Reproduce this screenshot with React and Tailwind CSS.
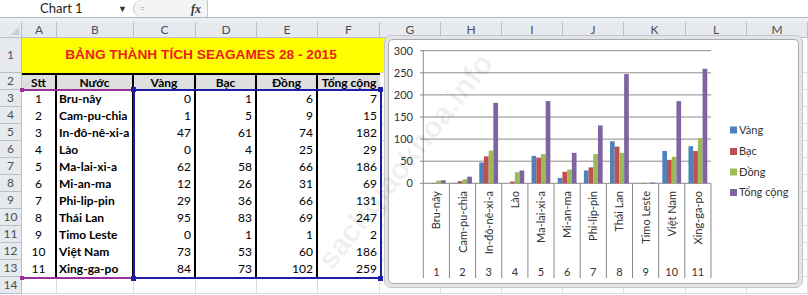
import React from 'react';

const COLS = [
  { key: 'A', w: 35 }, { key: 'B', w: 77 }, { key: 'C', w: 62 }, { key: 'D', w: 61 },
  { key: 'E', w: 61 }, { key: 'F', w: 62 }, { key: 'G', w: 61 }, { key: 'H', w: 61 },
  { key: 'I', w: 61 }, { key: 'J', w: 61 }, { key: 'K', w: 62 }, { key: 'L', w: 61 },
  { key: 'M', w: 61 },
];

const DATA = [
  ['Bru-nây', 0, 1, 6, 7],
  ['Cam-pu-chia', 1, 5, 9, 15],
  ['In-đô-nê-xi-a', 47, 61, 74, 182],
  ['Lào', 0, 4, 25, 29],
  ['Ma-lai-xi-a', 62, 58, 66, 186],
  ['Mi-an-ma', 12, 26, 31, 69],
  ['Phi-lip-pin', 29, 36, 66, 131],
  ['Thái Lan', 95, 83, 69, 247],
  ['Timo Leste', 0, 1, 1, 2],
  ['Việt Nam', 73, 53, 60, 186],
  ['Xing-ga-po', 84, 73, 102, 259],
];

const SERIES = [
  { name: 'Vàng', color: '#4f81bd' },
  { name: 'Bạc', color: '#c0504d' },
  { name: 'Đồng', color: '#9bbb59' },
  { name: 'Tổng cộng', color: '#8064a2' },
];

const HEAD = ['Stt', 'Nước', 'Vàng', 'Bạc', 'Đồng', 'Tổng cộng'];

const hdr = 'flex items-center justify-center bg-[#e6e9ed] border-r border-b border-[#b9c0c9] text-[#4b4f55]';
const plain = 'border-r border-b border-[#d8dbdf] bg-white';

// chart geometry (px, relative to chart inner box)
const X0 = 34.3;
const CW = 26.15;
const Y0 = 143.3;
const K = 0.442;
const BW = 4.7;

const Chart = () => (
  <svg width="409" height="243" viewBox="0 0 409 243" className="block" fontFamily="Lato, 'Liberation Sans', sans-serif">
    {[0, 50, 100, 150, 200, 250, 300].map(v => {
      const y = Y0 - v * K;
      return (
        <g key={v}>
          <line x1={31} x2={322} y1={y} y2={y} stroke="#8a8a8a" strokeWidth="1" />
          <text x={24} y={y + 3.8} fontSize="11" fill="#333" textAnchor="end">{v}</text>
        </g>
      );
    })}
    <line x1={X0} x2={X0} y1={Y0 - 300 * K} y2={238} stroke="#8a8a8a" />
    {DATA.map((row, i) => {
      const cx = X0 + CW * i;
      const start = cx + (CW - BW * 4) / 2;
      return (
        <g key={row[0]}>
          {row.slice(1).map((v, s) => (
            <rect key={s} x={start + s * BW} y={Y0 - v * K} width={BW} height={v * K} fill={SERIES[s].color} />
          ))}
          <line x1={cx + CW} x2={cx + CW} y1={Y0} y2={238} stroke="#8a8a8a" />
          <text transform={`translate(${cx + CW / 2 + 4} 151) rotate(-90)`} fontSize="11" fill="#333" textAnchor="end">{row[0]}</text>
          <text x={cx + CW / 2} y={235.5} fontSize="11" fill="#333" textAnchor="middle">{i + 1}</text>
        </g>
      );
    })}
    {SERIES.map((s, i) => {
      const y = [90, 111.5, 132, 152.5][i];
      return (
        <g key={s.name}>
          <rect x={341} y={y - 3.5} width={7} height={7} fill={s.color} />
          <text x={350} y={y + 3.8} fontSize="11" fill="#333">{s.name}</text>
        </g>
      );
    })}
  </svg>
);

export default function App() {
  return (
    <div className="relative w-[808px] h-[295px] overflow-hidden bg-white font-['Lato','Liberation_Sans',sans-serif]">
      {/* Formula bar */}
      <div className="flex h-[18px] border-b border-[#aeb6c0] bg-white text-[13px] text-[#222]">
        <div className="flex w-[133px] items-center pl-[40px] pr-[6px]">
          <span>Chart 1</span>
          <span className="ml-auto text-[9px] text-[#333]">▼</span>
        </div>
        <div className="flex w-[74px] items-center rounded-l-full border-l border-[#c3c8cf] bg-[#f3f4f6] pl-[6px] pr-[6px]">
          <span className="text-[9px] leading-none text-[#9aa0a8]">=</span>
          <span className="ml-auto font-['Liberation_Serif',serif] text-[12px] font-bold italic text-[#333]">fx</span>
        </div>
        <div className="flex-1 border-l border-[#c3c8cf] bg-white" />
      </div>
      <div className="h-[4px] bg-[#eceef1]" />

      {/* Sheet */}
      <div className="relative">
        <div className="grid grid-cols-[22px_35px_77px_62px_61px_61px_62px_61px_61px_61px_61px_62px_61px_61px] grid-rows-[16px_35px_repeat(13,17px)] text-[12px]">
          {/* column headers */}
          <div className={`${hdr} relative`}>
            <svg width="8" height="8" className="absolute right-[2px] bottom-[2px]"><polygon points="8,0 8,8 0,8" fill="#c9ced5" /></svg>
          </div>
          {COLS.map(c => (
            <div key={c.key} className={hdr}>{c.key}</div>
          ))}

          {/* row 1 */}
          <div className={hdr}>1</div>
          <div className="col-span-6 flex items-center justify-center bg-[#ffff00] font-['Liberation_Sans',sans-serif] text-[13.7px] font-bold text-[#ee1c1c]">
            BẢNG THÀNH TÍCH SEAGAMES 28 - 2015
          </div>
          <div className="border-b border-r border-[#d8dbdf] bg-[#ffff00]" />
          {COLS.slice(7).map(c => <div key={c.key} className={plain} />)}

          {/* row 2 */}
          <div className={hdr}>2</div>
          {HEAD.map((h, i) => (
            <div key={h} className={`flex items-center justify-center border-t-2 border-t-black bg-[#dedede] font-bold text-black ${i < 5 ? 'border-r-2 border-r-black' : ''}`}>
              {h}
            </div>
          ))}
          {COLS.slice(6).map(c => <div key={c.key} className={plain} />)}

          {/* data rows */}
          {DATA.map((row, r) => (
            <React.Fragment key={row[0]}>
              <div className={hdr}>{r + 3}</div>
              <div className="flex items-center justify-center border-r-2 border-r-black bg-white text-black">{r + 1}</div>
              <div className="flex items-center border-r-2 border-r-black bg-white pl-[2px] font-bold text-black">{row[0]}</div>
              {row.slice(1).map((v, i) => (
                <div key={i} className={`flex items-center justify-end bg-white pr-[3px] text-black ${i < 3 ? 'border-r-2 border-r-black' : ''}`}>{v}</div>
              ))}
              {COLS.slice(6).map(c => <div key={c.key} className={plain} />)}
            </React.Fragment>
          ))}

          {/* row 14 */}
          <div className={hdr}>14</div>
          {COLS.map(c => <div key={c.key} className={plain} />)}
        </div>

        {/* chart data range highlight */}
        <div className="pointer-events-none absolute left-[22px] top-[67px] h-[190px] w-[112px] border-y-2 border-[#9a2f9a]" />
        <div className="pointer-events-none absolute left-[133px] top-[67px] h-[190px] w-[249px] border-2 border-[#1d1da6]" />
        <div className="absolute left-[20px] top-[66px] h-[4px] w-[4px] bg-[#9a2f9a]" />
        <div className="absolute left-[20px] top-[254px] h-[4px] w-[4px] bg-[#9a2f9a]" />
        <div className="absolute left-[131px] top-[65px] h-[5px] w-[5px] bg-[#1d1da6]" />
        <div className="absolute left-[378px] top-[65px] h-[5px] w-[5px] bg-[#1d1da6]" />
        <div className="absolute left-[131px] top-[254px] h-[5px] w-[5px] bg-[#1d1da6]" />
        <div className="absolute left-[378px] top-[254px] h-[5px] w-[5px] bg-[#1d1da6]" />
      </div>

      {/* Chart object */}
      <div className="absolute left-[384px] top-[35px] h-[253px] w-[419px] rounded-[7px] border border-[#c4c7cc] bg-[#e3e4e6] p-[3px]">
        <div className="h-full w-full overflow-hidden rounded-[5px] border border-[#a9abae] bg-white">
          <Chart />
        </div>
      </div>

      {/* watermark */}
      <div className="pointer-events-none absolute left-[405px] top-[161px] -translate-x-1/2 -translate-y-1/2 -rotate-[52deg] whitespace-nowrap font-['Liberation_Sans',sans-serif] text-[30px] font-bold text-black/[0.06]">
        sachgiaokhoa.info
      </div>
    </div>
  );
}
